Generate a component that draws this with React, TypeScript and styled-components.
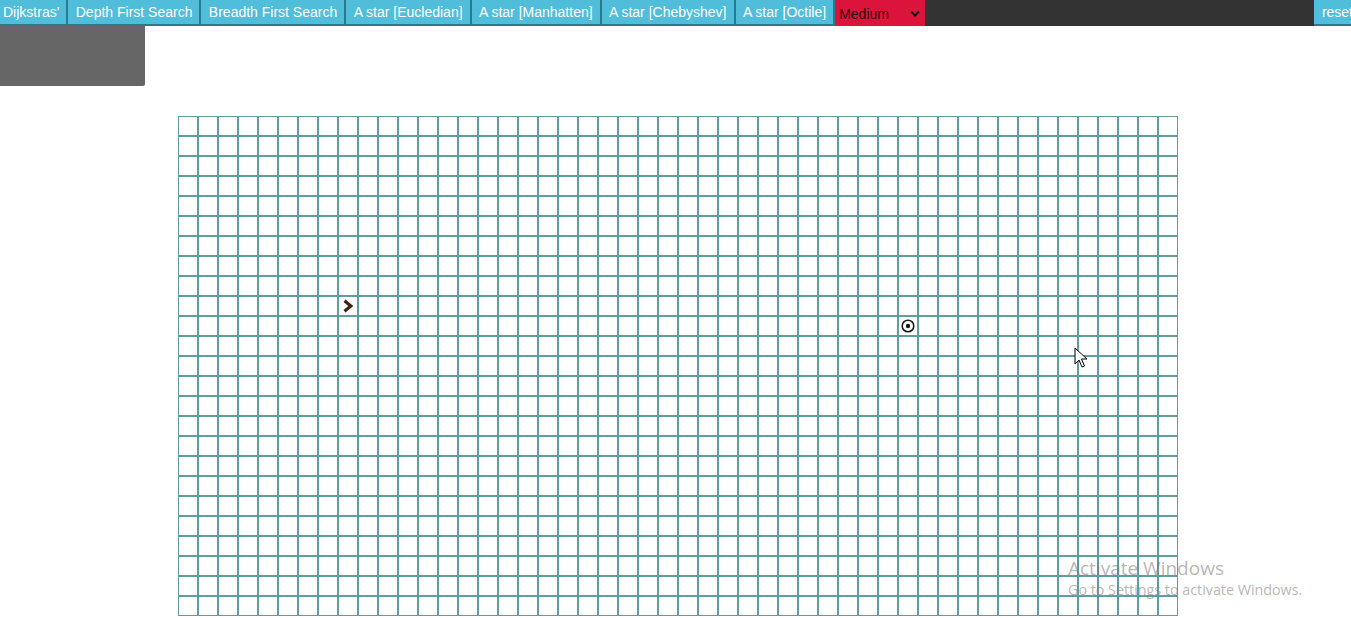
import React from "react";
import styled, { createGlobalStyle } from "styled-components";

const Global = createGlobalStyle`
  html, body { margin: 0; padding: 0; background: #fff; overflow: hidden; }
  body { font-family: "Liberation Sans", Arial, sans-serif; }
`;

const Page = styled.div`
  position: relative;
  width: 1351px;
  height: 618px;
  overflow: hidden;
`;

const TopBar = styled.nav`
  display: flex;
  align-items: stretch;
  width: 1362px;
  height: 26px;
  background: #333333;
`;

const AlgoButton = styled.button<{ $push?: boolean; $first?: boolean }>`
  display: flex;
  align-items: center;
  height: 26px;
  margin: 0;
  margin-left: ${(p) => (p.$push ? "auto" : "0")};
  padding: 0 7px 0 ${(p) => (p.$first ? "3px" : "7.4px")};
  background: #50bddb;
  color: #ffffff;
  border: none;
  border-right: 2px solid #2a7a8d;
  border-bottom: 2px solid #2a7a8d;
  font-family: "Liberation Sans", Arial, sans-serif;
  font-size: 14px;
  white-space: nowrap;
  cursor: pointer;
`;

const SelectWrap = styled.div`
  position: relative;
  width: 90px;
  height: 26px;
  background: #dc143c;
`;

const SpeedSelect = styled.select`
  appearance: none;
  width: 100%;
  height: 100%;
  margin: 0;
  padding: 1px 0 0 4px;
  border: none;
  background: transparent;
  color: #2a0a10;
  font-family: "Liberation Sans", Arial, sans-serif;
  font-size: 14px;
`;

const Caret = styled.svg`
  position: absolute;
  right: 5px;
  top: 10px;
  pointer-events: none;
`;

const Panel = styled.div`
  width: 145px;
  height: 60px;
  background: #666666;
  border-bottom-right-radius: 2px;
`;

const Board = styled.div`
  display: grid;
  grid-template-columns: repeat(50, 20px);
  grid-auto-rows: 20px;
  margin: 30px 0 0 178px;
  width: 1000px;
`;

const Cell = styled.div`
  box-sizing: border-box;
  border: 1px solid #5f9ea0;
  display: flex;
  align-items: center;
  justify-content: center;
`;

const Watermark = styled.div`
  position: absolute;
  left: 1068px;
  top: 555px;
  color: rgba(120, 120, 120, 0.55);
  font-family: "Open Sans", "Noto Sans", sans-serif;
  pointer-events: none;
`;

const WmTitle = styled.div`
  font-size: 19px;
  line-height: 26px;
`;

const WmSub = styled.div`
  font-size: 14.3px;
  line-height: 18px;
  margin-top: 0px;
`;

const Pointer = styled.svg`
  position: absolute;
  left: 1074px;
  top: 347px;
`;

const buttons = [
  "Dijkstras'",
  "Depth First Search",
  "Breadth First Search",
  "A star [Eucledian]",
  "A star [Manhatten]",
  "A star [Chebyshev]",
  "A star [Octile]",
];

const ROWS = 25;
const COLS = 50;
const START = { r: 9, c: 8 };
const END = { r: 10, c: 36 };

function StartIcon() {
  return (
    <svg width="12" height="14" viewBox="0 0 12 14">
      <polyline
        points="2.5,1.8 8.8,7 2.5,12.2"
        fill="none"
        stroke="#3a2410"
        strokeWidth="3.2"
        strokeLinejoin="miter"
      />
    </svg>
  );
}

function EndIcon() {
  return (
    <svg width="16" height="16" viewBox="0 0 16 16">
      <circle cx="8" cy="8" r="5.8" fill="none" stroke="#1a1a1a" strokeWidth="1.6" />
      <circle cx="8" cy="8" r="2.2" fill="#1a1a1a" />
    </svg>
  );
}

export default function App() {
  const cells = [];
  for (let r = 0; r < ROWS; r++) {
    for (let c = 0; c < COLS; c++) {
      let content: React.ReactNode = null;
      if (r === START.r && c === START.c) content = <StartIcon />;
      if (r === END.r && c === END.c) content = <EndIcon />;
      cells.push(<Cell key={`${r}-${c}`}>{content}</Cell>);
    }
  }
  return (
    <Page>
      <Global />
      <TopBar>
        {buttons.map((b, i) => (
          <AlgoButton key={b} $first={i === 0}>
            {b}
          </AlgoButton>
        ))}
        <SelectWrap>
          <SpeedSelect defaultValue="Medium">
            <option>Fast</option>
            <option>Medium</option>
            <option>Slow</option>
          </SpeedSelect>
          <Caret width="10" height="8" viewBox="0 0 10 8">
            <polyline points="1,1.5 5,5.5 9,1.5" fill="none" stroke="#111" strokeWidth="2" />
          </Caret>
        </SelectWrap>
        <AlgoButton $push>reset</AlgoButton>
      </TopBar>
      <Panel />
      <Board>{cells}</Board>
      <Pointer width="14" height="22" viewBox="0 0 14 22">
        <path
          d="M1,1 L1,17 L5,13 L8,20 L10.5,19 L7.5,12 L13,12 Z"
          fill="#fff"
          stroke="#000"
          strokeWidth="1"
          strokeLinejoin="round"
        />
      </Pointer>
      <Watermark>
        <WmTitle>Activate Windows</WmTitle>
        <WmSub>Go to Settings to activate Windows.</WmSub>
      </Watermark>
    </Page>
  );
}
